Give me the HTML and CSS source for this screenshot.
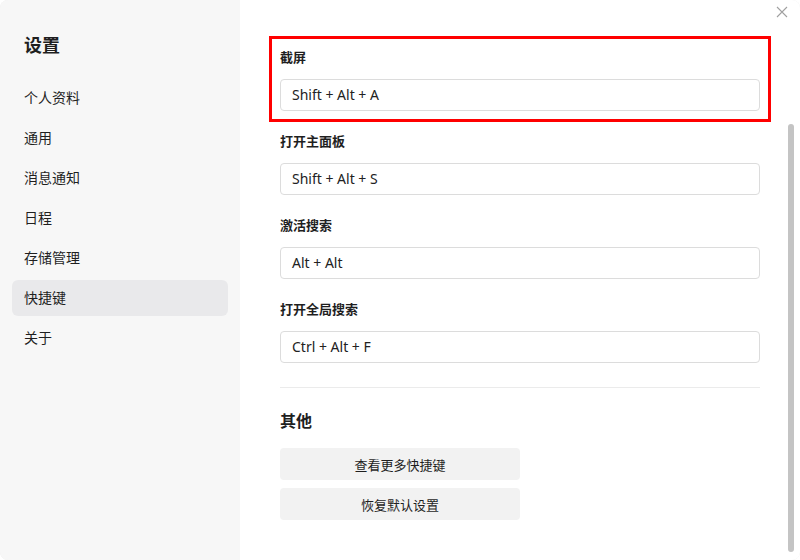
FILE: index.html
```html
<!DOCTYPE html>
<html lang="zh-CN">
  <head>
    <meta charset="UTF-8" />
    <meta name="viewport" content="width=device-width, initial-scale=1.0" />
    <title>设置</title>
    <link rel="stylesheet" href="styles.css">
  </head>
  <body>
    <div class="dialog">
      <!-- 左侧菜单 -->
      <div class="side">
        <h1 class="side-title">设置</h1>
        <ul class="menu">
          <li>个人资料</li>
          <li>通用</li>
          <li>消息通知</li>
          <li>日程</li>
          <li>存储管理</li>
          <li class="active">快捷键</li>
          <li>关于</li>
        </ul>
      </div>

      <!-- 右侧内容 -->
      <div class="main">
        <span class="close">
          <svg width="12" height="12" viewBox="0 0 12 12">
            <path d="M1 1L11 11M11 1L1 11" stroke="#a0a0a0" stroke-width="1.1" fill="none" />
          </svg>
        </span>

        <div class="group marked">
          <div class="label">截屏</div>
          <div class="key">Shift + Alt + A</div>
        </div>
        <div class="group">
          <div class="label">打开主面板</div>
          <div class="key">Shift + Alt + S</div>
        </div>
        <div class="group">
          <div class="label">激活搜索</div>
          <div class="key">Alt + Alt</div>
        </div>
        <div class="group">
          <div class="label">打开全局搜索</div>
          <div class="key">Ctrl + Alt + F</div>
        </div>

        <div class="divider"></div>

        <h2 class="sub-title">其他</h2>
        <div class="btns">
          <button>查看更多快捷键</button>
          <button>恢复默认设置</button>
        </div>

        <span class="scroll-thumb"></span>
      </div>
    </div>
  </body>
</html>
```

FILE: styles.css
```css
* {
  margin: 0;
  padding: 0;
  box-sizing: border-box;
}
ul {
  list-style: none;
}
body {
  background-color: #fff;
  font-family: "Noto Sans", "Noto Sans CJK SC", sans-serif;
  color: #1f1f1f;
}

/* 外框的细边用 inset 阴影画, 不占位置 */
.dialog {
  display: flex;
  width: 800px;
  height: 560px;
  border-radius: 8px;
  overflow: hidden;
  box-shadow: inset 0 0 0 1px #ececec;
}

/* side */

.side {
  width: 240px;
  flex-shrink: 0;
  padding: 0 12px;
  background-color: #f7f7f7;
}

.side-title {
  margin-top: 33px;
  padding-left: 12px;
  font-size: 18px;
  line-height: 24px;
  font-weight: bold;
}

.menu {
  margin-top: 23px;
  display: flex;
  flex-direction: column;
  gap: 4px;
}

.menu li {
  height: 36px;
  line-height: 36px;
  padding-left: 12px;
  font-size: 14px;
  border-radius: 6px;
}

.menu li.active {
  background-color: #e9e9eb;
}

/* side end */

/* main */

.main {
  position: relative;
  flex: 1;
  padding: 47px 40px 0 40px;
  background-color: #fff;
}

.close {
  position: absolute;
  top: 6px;
  right: 12px;
  display: flex;
}

.group {
  margin-bottom: 20px;
}

/* 截图标注的红框 */
.group.marked {
  outline: 3px solid #ff0000;
  outline-offset: 8px;
}

.label {
  font-size: 13px;
  line-height: 20px;
  font-weight: bold;
  margin-bottom: 12px;
}

.key {
  height: 32px;
  line-height: 30px;
  padding-left: 11px;
  border: 1px solid #dcdcdc;
  border-radius: 4px;
  font-size: 14px;
  color: #222;
}

.divider {
  height: 1px;
  margin-top: 24px;
  background-color: #ebebeb;
}

.sub-title {
  margin-top: 21px;
  font-size: 16px;
  line-height: 24px;
  font-weight: bold;
}

.btns {
  margin-top: 15px;
  display: flex;
  flex-direction: column;
  gap: 8px;
}

.btns button {
  width: 240px;
  height: 32px;
  border: none;
  border-radius: 4px;
  background-color: #f2f2f2;
  font-family: inherit;
  font-size: 13px;
  color: #1f1f1f;
}

.scroll-thumb {
  position: absolute;
  right: 6px;
  top: 124px;
  width: 6px;
  height: 428px;
  border-radius: 3px;
  background-color: #c4c4c4;
}

/* main end */
```
